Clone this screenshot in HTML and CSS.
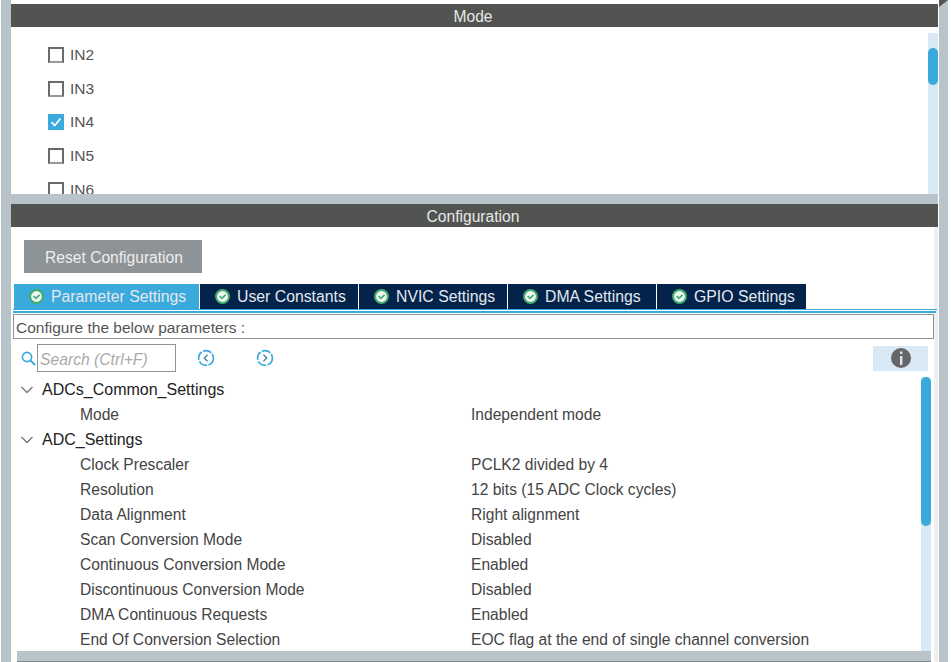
FILE: index.html
```html
<!DOCTYPE html>
<html>
    <head>
        <meta charset="utf-8">
        <title>ADC Configuration</title>
        <link rel="stylesheet" href="styles.css">
    </head>
    <body>
        <svg width="0" height="0" class="defs">
            <symbol id="ok" viewBox="0 0 15 15">
                <circle cx="7.5" cy="7.5" r="7.5" fill="#3fae6f"/>
                <circle cx="7.5" cy="7.5" r="5.4" fill="#f2f7f4"/>
                <path d="M4.6 7 L6.9 9.4 L10.6 5.8" fill="none" stroke="#3fae6f" stroke-width="1.7"/>
            </symbol>
            <symbol id="chevron" viewBox="0 0 14 8">
                <path d="M1.5 1 L7 6.5 L12.5 1" fill="none" stroke="#777" stroke-width="1.3"/>
            </symbol>
            <symbol id="tick" viewBox="0 0 16 16">
                <path d="M3.5 8 L6.8 11.5 L12.5 4.5" fill="none" stroke="#fff" stroke-width="1.8"/>
            </symbol>
        </svg>
        <div class="frame">
            <div class="strip"></div>
            <div class="main">
                <div class="panel-head">Mode</div>
                <div class="mode-panel">
                    <div class="mode-list">
                        <label class="mode-row"><span class="check"></span>IN2</label>
                        <label class="mode-row"><span class="check"></span>IN3</label>
                        <label class="mode-row"><span class="check on"><svg width="16" height="16"><use href="#tick"/></svg></span>IN4</label>
                        <label class="mode-row"><span class="check"></span>IN5</label>
                        <label class="mode-row"><span class="check"></span>IN6</label>
                    </div>
                    <div class="scroll mode-scroll"><div class="thumb mode-thumb"></div></div>
                </div>

                <div class="panel-head">Configuration</div>
                <div class="config-panel">
                    <div class="reset-btn">Reset Configuration</div>

                    <div class="tabs">
                        <div class="tab active"><svg width="15" height="15"><use href="#ok"/></svg>Parameter Settings</div>
                        <div class="tab t2"><svg width="15" height="15"><use href="#ok"/></svg>User Constants</div>
                        <div class="tab t3"><svg width="15" height="15"><use href="#ok"/></svg>NVIC Settings</div>
                        <div class="tab t3"><svg width="15" height="15"><use href="#ok"/></svg>DMA Settings</div>
                        <div class="tab t4"><svg width="15" height="15"><use href="#ok"/></svg>GPIO Settings</div>
                    </div>
                    <div class="tab-rule"></div>
                    <div class="tab-rule2"></div>

                    <div class="hint">Configure the below parameters :</div>

                    <div class="toolbar">
                        <svg class="search-icon" width="15" height="15" viewBox="0 0 15 15">
                            <circle cx="6" cy="6" r="4.6" fill="none" stroke="#3aa9dc" stroke-width="1.7"/>
                            <path d="M9.5 9.5 L14 14" stroke="#3aa9dc" stroke-width="2"/>
                        </svg>
                        <div class="search">Search (Ctrl+F)</div>
                        <svg class="nav-icon prev" width="18" height="18" viewBox="0 0 18 18">
                            <circle cx="9" cy="9" r="7.4" fill="none" stroke="#3aa9dc" stroke-width="1.6" stroke-dasharray="9 1.5"/>
                            <path d="M10.5 5.8 L7.3 9 L10.5 12.2" fill="none" stroke="#3a7fa8" stroke-width="1.3"/>
                        </svg>
                        <svg class="nav-icon next" width="18" height="18" viewBox="0 0 18 18">
                            <circle cx="9" cy="9" r="7.4" fill="none" stroke="#3aa9dc" stroke-width="1.6" stroke-dasharray="9 1.5"/>
                            <path d="M7.5 5.8 L10.7 9 L7.5 12.2" fill="none" stroke="#3a7fa8" stroke-width="1.3"/>
                        </svg>
                        <div class="info-btn">
                            <svg width="20" height="20" viewBox="0 0 20 20">
                                <circle cx="10" cy="10" r="10" fill="#666"/>
                                <rect x="9" y="8" width="2.4" height="9" fill="#d9e8f5"/>
                                <rect x="9" y="3.5" width="2.4" height="2.4" fill="#d9e8f5"/>
                            </svg>
                        </div>
                    </div>

                    <div class="tree-wrap">
                        <div class="tree">
                            <div class="row group"><svg class="chev" width="14" height="8"><use href="#chevron"/></svg>ADCs_Common_Settings</div>
                            <div class="row"><span class="name">Mode</span><span>Independent mode</span></div>
                            <div class="row group"><svg class="chev" width="14" height="8"><use href="#chevron"/></svg>ADC_Settings</div>
                            <div class="row"><span class="name">Clock Prescaler</span><span>PCLK2 divided by 4</span></div>
                            <div class="row"><span class="name">Resolution</span><span>12 bits (15 ADC Clock cycles)</span></div>
                            <div class="row"><span class="name">Data Alignment</span><span>Right alignment</span></div>
                            <div class="row"><span class="name">Scan Conversion Mode</span><span>Disabled</span></div>
                            <div class="row"><span class="name">Continuous Conversion Mode</span><span>Enabled</span></div>
                            <div class="row"><span class="name">Discontinuous Conversion Mode</span><span>Disabled</span></div>
                            <div class="row"><span class="name">DMA Continuous Requests</span><span>Enabled</span></div>
                            <div class="row"><span class="name">End Of Conversion Selection</span><span>EOC flag at the end of single channel conversion</span></div>
                        </div>
                        <div class="scroll tree-scroll"><div class="thumb tree-thumb"></div></div>
                    </div>
                    <div class="hbar"></div>
                </div>
            </div>
            <div class="strip right-strip">
                <svg class="corner" width="9" height="7"><path d="M0 0 H9 L0 7 Z" fill="#555"/></svg>
            </div>
        </div>
    </body>
</html>
```

FILE: styles.css
```css
html, body {
    margin: 0;
    height: 100%;
    overflow: hidden;
    background-color: #fff;
}

body {
    font-family: "Liberation Sans", Arial, sans-serif;
    font-size: 16px;
    color: #444;
}

.defs {
    display: block;
}

.frame {
    display: flex;
    width: 948px;
    height: 662px;
    padding-left: 1px;
    box-sizing: border-box;
}

.strip {
    flex: none;
    width: 10px;
    background-color: #b8c3ca;
}

.right-strip {
    position: relative;
    width: 9px;
    margin-left: 1px;
}

.corner {
    position: absolute;
    top: 0;
    left: 0;
}

.main {
    flex: none;
    width: 927px;
    display: flex;
    flex-direction: column;
    padding-top: 4px;
    box-sizing: border-box;
}

.panel-head {
    flex: none;
    height: 23px;
    line-height: 25px;
    text-align: center;
    font-size: 15.6px;
    background-color: #525452;
    color: #e8e8e8;
    padding-right: 3px;
}

/* Mode */
.mode-panel {
    flex: none;
    height: 167px;
    display: flex;
    overflow: hidden;
    background-color: #fff;
    border-bottom: 10px solid #b8c3ca;
}

.mode-list {
    flex: 1;
    padding: 11px 0 0 37px;
}

.mode-row {
    display: flex;
    align-items: center;
    height: 33.7px;
    font-size: 15.5px;
    color: #555;
}

.check {
    flex: none;
    width: 12px;
    height: 12px;
    margin-right: 6px;
    border: 2px solid #6a6a6a;
    border-bottom-color: #999;
    background-color: #fff;
    display: block;
}

.check.on {
    width: 16px;
    height: 16px;
    margin-right: 6px;
    border: 0;
    background-color: #3aa9dc;
}

.check svg {
    display: block;
}

.scroll {
    flex: none;
    width: 10px;
    background-color: #d9e8f5;
}

.thumb {
    background-color: #3aa9dc;
    border-radius: 5px;
}

.mode-scroll {
    margin-top: 6px;
}

.mode-thumb {
    margin-top: 15px;
    height: 37px;
}

/* Configuration */
.config-panel {
    flex: 1;
    min-height: 0;
    display: flex;
    flex-direction: column;
    background: linear-gradient(#f0f0f0, #f0f0f0) 923px 0 / 4px 100% no-repeat;
}

.reset-btn {
    flex: none;
    align-self: flex-start;
    width: 178px;
    height: 33px;
    margin: 13px 0 0 13px;
    padding-left: 2px;
    box-sizing: border-box;
    line-height: 35px;
    text-align: center;
    font-size: 15.6px;
    background-color: #8e9398;
    color: #eee;
}

.tabs {
    flex: none;
    display: flex;
    gap: 1px;
    height: 25px;
    margin: 11px 0 0 3px;
    font-size: 15.8px;
}

.tab {
    display: flex;
    align-items: center;
    gap: 7px;
    padding-left: 15px;
    box-sizing: border-box;
    width: 148px;
    background-color: #03234b;
    color: #e4e8ee;
}

.tab.active {
    width: 185px;
    background-color: #3aa9dc;
}

.tab.t2 {
    width: 158px;
}

.tab.t4 {
    width: 149px;
}

.tab-rule {
    flex: none;
    height: 1px;
    background-color: #3aa9dc;
    margin: 0 1px 0 2px;
}

.tab-rule2 {
    flex: none;
    height: 2px;
    margin: 1px 2px 0 2px;
    background-color: #3aa9dc;
}

.hint {
    flex: none;
    width: 921px;
    height: 25px;
    box-sizing: border-box;
    margin: 1px 0 0 2px;
    padding-left: 2px;
    line-height: 26px;
    font-size: 15.5px;
    border: 1px solid #8e9398;
    background-color: #fff;
    color: #555;
}

.toolbar {
    flex: none;
    display: flex;
    align-items: center;
    height: 28px;
    margin-top: 5px;
    padding-left: 10px;
}

.search-icon {
    flex: none;
}

.search {
    flex: none;
    width: 139px;
    height: 28px;
    margin-left: 1px;
    padding-left: 2px;
    box-sizing: border-box;
    line-height: 30px;
    font-size: 15.7px;
    border: 1px solid #8e9398;
    font-style: italic;
    color: #aaa;
}

.nav-icon {
    flex: none;
}

.prev {
    margin-left: 21px;
}

.next {
    margin-left: 41px;
}

.info-btn {
    flex: none;
    width: 55px;
    height: 25px;
    margin-left: 599px;
    display: flex;
    align-items: center;
    justify-content: center;
    background-color: #d9e8f5;
}

.tree-wrap {
    flex: none;
    height: 274px;
    display: flex;
    margin-top: 5px;
    overflow: hidden;
}

.tree {
    flex: none;
    width: 910px;
}

.row {
    display: flex;
    align-items: center;
    height: 25px;
    font-size: 15.6px;
    color: #444;
}

.row .name {
    flex: none;
    width: 391px;
    margin-left: 69px;
}

.row.group {
    font-size: 16px;
    color: #222;
}

.chev {
    flex: none;
    margin: 0 8px 0 9px;
}

.tree-scroll {
    height: 274px;
}

.tree-thumb {
    height: 149px;
}

.hbar {
    flex: none;
    height: 10px;
    width: 914px;
    margin-left: 6px;
    background-color: #b8c3ca;
    border-bottom: 1px solid #7f8a90;
}
```
